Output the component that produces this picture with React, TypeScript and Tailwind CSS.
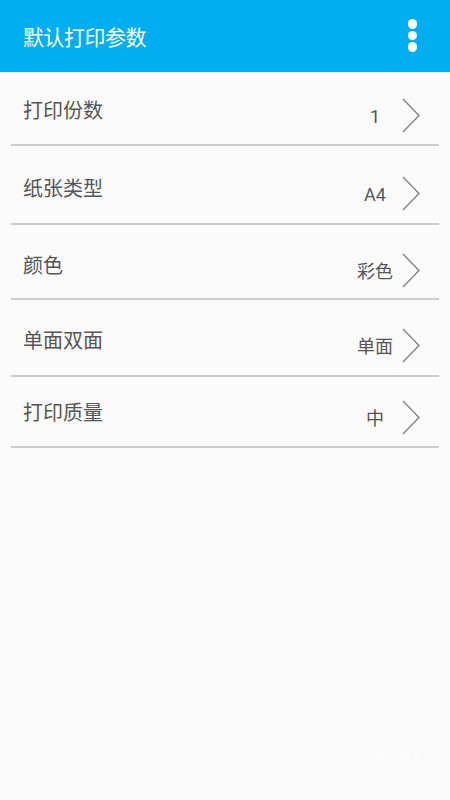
import React from "react";

const rows = [
  { label: "打印份数", value: "1", h: "h-[72px]", pt: "pt-[29px]" },
  { label: "纸张类型", value: "A4", h: "h-[77px]", pt: "pt-[33px]" },
  { label: "颜色", value: "彩色", h: "h-[73px]", pt: "pt-[31px]" },
  { label: "单面双面", value: "单面", h: "h-[75px]", pt: "pt-[31px]" },
  { label: "打印质量", value: "中", h: "h-[69px]", pt: "pt-[26px]" },
];

function Chevron() {
  return (
    <svg width="18" height="35" viewBox="0 0 18 35" className="block shrink-0">
      <polyline points="1,1 17,17.5 1,34" fill="none" stroke="#8a8a8a" strokeWidth="1.6" />
    </svg>
  );
}

export default function App() {
  const font = { fontFamily: 'Roboto, "Noto Sans CJK SC", sans-serif' };
  return (
    <div className="w-[450px] h-[800px] bg-[#fafafa] relative overflow-hidden" style={font}>
      <div className="h-[72px] bg-[#00aeef] flex items-center justify-between pl-[23px] pr-[33px]">
        <span className="text-white text-[21px] leading-[24px] tracking-[-0.5px] mt-[3px]">默认打印参数</span>
        <div className="flex flex-col gap-[2px] mt-[-1px]">
          <span className="block w-[9.5px] h-[9.5px] rounded-full bg-white" />
          <span className="block w-[9.5px] h-[9.5px] rounded-full bg-white" />
          <span className="block w-[9.5px] h-[9.5px] rounded-full bg-white" />
        </div>
      </div>
      <div className="flex flex-col">
        {rows.map((r) => (
          <div key={r.label} className="flex flex-col">
            <div className={`${r.h} ${r.pt} flex items-start justify-between pl-[23px] pr-[30px]`}>
              <span className="text-[20px] leading-[20px] text-[#555555]">{r.label}</span>
              <div className="flex items-center gap-[6px] mt-[-3px]">
                <span className="w-[42px] text-center text-[18px] leading-[20px] text-[#555555] mt-[3px]">
                  {r.value}
                </span>
                <Chevron />
              </div>
            </div>
            <div className="mx-[11px] h-[2px] bg-[#cccccc]" />
          </div>
        ))}
      </div>
      <div className="absolute left-[345px] top-[744px] text-[#fdfdfd] text-[22px] leading-[24px]">搜搜游戏</div>
    </div>
  );
}
